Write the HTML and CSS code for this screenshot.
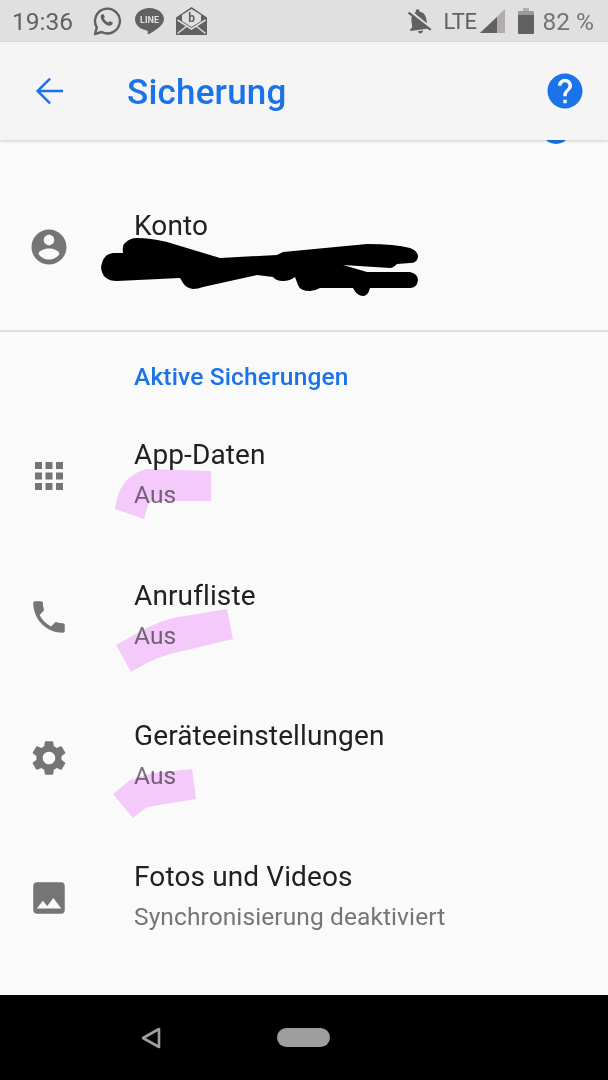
FILE: index.html
```html
<!DOCTYPE html>
<html lang="de">
<head>
    <meta charset="UTF-8">
    <meta name="viewport" content="width=device-width, initial-scale=1.0">
    <title>Sicherung</title>
    <link rel="stylesheet" href="styles.css">
</head>
<body>
<div class="phone">

    <div class="statusbar">
        <span class="time">19:36</span>
        <svg class="st-whatsapp" viewBox="0 0 28 30">
            <path d="M2 28l1.8-6.6A12.4 12.4 0 1 1 8.6 26z" fill="none" stroke="#616161" stroke-width="2.4" stroke-linejoin="round"/>
            <path d="M10.2 8c-.6 0-1.5.3-2 1.1-.8 1.100-.7 2.900.3 4.700 1.400 2.600 3.700 4.700 6.400 5.600 1.700.6 3.400.3 4.200-.8.500-.6.700-1.500.6-2.100l-3.100-1.500-1.300 1.500c-1.900-.7-3.600-2.300-4.500-4.200l1.100-1.300z" fill="#616161"/>
        </svg>
        <svg class="st-line" viewBox="0 0 29 27">
            <path d="M14.500 0C6.500 0 0 5 0 11.300c0 5.600 5 10.200 11.800 11.100.9.200 1.100.6 1 1.300l-.2 1.800c-.1.800.5 1 1.300.6 3.500-1.800 14.900-8 15.100-14.800C29 5 22.500 0 14.500 0z" fill="#616161"/>
            <text x="14.500" y="14.500" class="st-line-text" text-anchor="middle">LINE</text>
        </svg>
        <svg class="st-mail" viewBox="0 0 31 28">
            <path d="M15.500 0L31 10.500V28H0V10.500z" fill="#616161"/>
            <path d="M6 8l9.500-6 9.500 6v6l-9.500 6-9.500-6z" fill="#e0e0e0"/>
            <path d="M1.500 13l14 9 14-9M1.500 26.500l10-8M29.500 26.500l-10-8" fill="none" stroke="#e0e0e0" stroke-width="1.500"/>
            <text x="15.500" y="15" class="st-mail-text" text-anchor="middle">b</text>
        </svg>
        <span class="spacer"></span>
        <svg class="st-bell" viewBox="0 0 24 24"><path d="M20 18.690L7.840 6.140 5.270 3.490 4 4.760l2.800 2.800v.01c-.52.99-.8 2.160-.8 3.420v5l-2 2v1h13.730l2 2L21 19.720l-1-1.030zM12 22c1.110 0 2-.89 2-2h-4c0 1.110.89 2 2 2zm6-7.320V11c0-3.080-1.640-5.640-4.500-6.320V4c0-.83-.67-1.500-1.500-1.500s-1.500.67-1.500 1.500v.68c-.15.03-.29.08-.42.12-.1.03-.2.07-.3.11h-.01c-.2.08-.4.17-.59.27-.01 0-.01 0-.02.01L18 14.680z" fill="#616161"/></svg>
        <span class="lte">LTE</span>
        <svg class="st-signal" viewBox="0 0 25 24">
            <path d="M25 0v24H0z" fill="#b0acb0"/>
            <path d="M17 8v16H0z" fill="#616161"/>
        </svg>
        <svg class="st-battery" viewBox="0 0 16 26">
            <path d="M5 0h6v3H5z" fill="#b0acb0"/>
            <path d="M1 3h14a1 1 0 0 1 1 1v3H0V4a1 1 0 0 1 1-1z" fill="#9a989a"/>
            <path d="M0 7h16v18a1 1 0 0 1-1 1H1a1 1 0 0 1-1-1z" fill="#616161"/>
        </svg>
        <span class="percent">82 %</span>
    </div>

    <header class="appbar">
        <svg class="icon" viewBox="0 0 24 24"><path d="M20 11.300H7.200l5.900-5.900L12.100 4.400 4.500 12l7.600 7.600 1-1-5.900-5.900H20z" fill="#1a73e8"/></svg>
        <h1 class="appbar-title">Sicherung</h1>
        <svg class="icon" viewBox="0 0 24 24"><path d="M12 2C6.480 2 2 6.480 2 12s4.480 10 10 10 10-4.480 10-10S17.520 2 12 2zm1 17h-2v-2h2v2zm2.070-7.750l-.9.92C13.450 12.900 13 13.500 13 15h-2v-.5c0-1.100.45-2.100 1.170-2.830l1.240-1.260c.37-.36.59-.86.59-1.410 0-1.100-.9-2-2-2s-2 .9-2 2H8c0-2.210 1.790-4 4-4s4 1.790 4 4c0 .88-.36 1.680-.93 2.250z" fill="#1a73e8"/></svg>
    </header>

    <main class="content">
        <span class="scrolled-dot"></span>

        <section class="row row-account">
            <svg class="icon" viewBox="0 0 24 24"><path d="M12 2C6.480 2 2 6.480 2 12s4.480 10 10 10 10-4.480 10-10S17.520 2 12 2zm0 3c1.660 0 3 1.340 3 3s-1.340 3-3 3-3-1.340-3-3 1.340-3 3-3zm0 14.200c-2.500 0-4.710-1.280-6-3.220.03-1.990 4-3.080 6-3.080 1.990 0 5.970 1.090 6 3.080-1.290 1.940-3.500 3.220-6 3.220z" fill="#757575"/></svg>
            <div class="row-text">
                <div class="title">Konto</div>
                <div class="sub">&nbsp;</div>
            </div>
        </section>

        <h2 class="group-title">Aktive Sicherungen</h2>

        <section class="row">
            <svg class="icon" viewBox="0 0 24 24"><path d="M4 8h4V4H4v4zm6 12h4v-4h-4v4zm-6 0h4v-4H4v4zm0-6h4v-4H4v4zm6 0h4v-4h-4v4zm6-10v4h4V4h-4zm-6 4h4V4h-4v4zm6 6h4v-4h-4v4zm0 6h4v-4h-4v4z" fill="#757575"/></svg>
            <div class="row-text">
                <div class="title">App-Daten</div>
                <div class="sub">Aus</div>
            </div>
        </section>

        <section class="row">
            <svg class="icon" viewBox="0 0 24 24"><path d="M6.620 10.790c1.440 2.830 3.760 5.140 6.590 6.590l2.200-2.200c.27-.27.67-.36 1.020-.24 1.120.37 2.330.57 3.570.57.55 0 1 .45 1 1V20c0 .55-.45 1-1 1-9.390 0-17-7.610-17-17 0-.55.45-1 1-1h3.500c.55 0 1 .45 1 1 0 1.250.2 2.450.57 3.570.11.35.03.74-.25 1.020l-2.200 2.200z" fill="#757575"/></svg>
            <div class="row-text">
                <div class="title">Anrufliste</div>
                <div class="sub">Aus</div>
            </div>
        </section>

        <section class="row">
            <svg class="icon" viewBox="0 0 24 24"><path d="M19.140 12.940c.04-.3.06-.61.06-.94 0-.32-.02-.64-.07-.94l2.030-1.580c.18-.14.23-.41.12-.61l-1.920-3.320c-.12-.22-.37-.29-.59-.22l-2.390.96c-.5-.38-1.030-.7-1.620-.94l-.36-2.540c-.04-.24-.24-.41-.48-.41h-3.840c-.24 0-.43.17-.47.41l-.36 2.540c-.59.24-1.130.57-1.620.94l-2.390-.96c-.22-.08-.47 0-.59.22L2.740 8.870c-.12.21-.08.47.12.61l2.030 1.580c-.05.3-.09.63-.09.94s.02.64.07.94l-2.030 1.580c-.18.14-.23.41-.12.61l1.920 3.320c.12.22.37.29.59.22l2.390-.96c.5.38 1.030.7 1.620.94l.36 2.540c.05.24.24.41.48.41h3.840c.24 0 .44-.17.47-.41l.36-2.540c.59-.24 1.130-.56 1.620-.94l2.390.96c.22.08.47 0 .59-.22l1.920-3.320c.12-.22.07-.47-.12-.61l-2.010-1.580zM12 15.600c-1.980 0-3.600-1.620-3.600-3.600s1.620-3.600 3.600-3.600 3.600 1.620 3.600 3.600-1.620 3.600-3.600 3.600z" fill="#757575"/></svg>
            <div class="row-text">
                <div class="title">Geräteeinstellungen</div>
                <div class="sub">Aus</div>
            </div>
        </section>

        <section class="row">
            <svg class="icon" viewBox="0 0 24 24"><path d="M21 19V5c0-1.100-.9-2-2-2H5c-1.100 0-2 .9-2 2v14c0 1.100.9 2 2 2h14c1.100 0 2-.9 2-2zM8.500 13.500l2.500 3.010L14.500 12l4.500 6H5l3.500-4.500z" fill="#757575"/></svg>
            <div class="row-text">
                <div class="title">Fotos und Videos</div>
                <div class="sub">Synchronisierung deaktiviert</div>
            </div>
        </section>
    </main>

    <nav class="navbar">
        <svg class="nav-back" viewBox="0 0 20 22"><path d="M2 11L18 2v18z" fill="none" stroke="#9e9e9e" stroke-width="2.600" stroke-linejoin="round"/></svg>
        <span class="nav-home"></span>
    </nav>

    <!-- Kritzeleien vom Screenshot -->
    <svg class="scribbles" viewBox="0 0 608 1080">
        <path class="ink" d="M101 267Q103 254 113 253L123 253Q122 245 125 243Q130 238 137 238Q150 238 167 242L220 258L277 255L283 252L367 244Q395 244 410 248Q418 251 418 257Q417 263 410 263L397 264Q393 268 390 268L343 265L367 272L410 272Q418 274 418 280Q417 288 410 288L370 288Q368 296 363 296Q357 296 353 288L320 288Q315 291 310 291Q300 291 298 285L295 277Q290 281 283 281Q276 281 273 277L257 275L203 287Q198 289 193 289Q186 288 183 283L180 278L117 281Q102 281 101 267z"/>
        <path class="marker" d="M115 509Q117 497 120 490Q124 482 130 477Q138 471 147 469L211 471V501H157Q150 501 148 505L144 519z"/>
        <path class="marker" d="M116 645L143 630Q158 622 173 618L227 609L233 639L187 650Q165 654 147 663L131 672z"/>
        <path class="marker" d="M113 794L130 780Q140 776 153 773L192 769L196 799L147 807L133 818z"/>
    </svg>

</div>
</body>
</html>
```

FILE: styles.css
```css
html, body {
    margin: 0;
    padding: 0;
}

body {
    font-family: 'Roboto', 'Liberation Sans', sans-serif;
    background-color: #fafafa;
}

.phone {
    position: relative;
    width: 608px;
    height: 1080px;
    overflow: hidden;
    display: flex;
    flex-direction: column;
}

/* Statusleiste */
.statusbar {
    height: 42px;
    flex: none;
    background-color: #e0e0e0;
    color: #616161;
    display: flex;
    align-items: center;
    padding: 0 14px 0 12px;
    box-sizing: border-box;
}

.time {
    font-size: 24.5px;
    width: 81px;
}

.st-whatsapp {
    width: 28px;
    height: 30px;
    margin-right: 14px;
}

.st-line {
    width: 29px;
    height: 27px;
    margin-right: 12px;
}

.st-line-text {
    font-size: 9px;
    font-weight: 700;
    fill: #e0e0e0;
}

.st-mail {
    width: 31px;
    height: 28px;
}

.st-mail-text {
    font-size: 12px;
    font-weight: 700;
    fill: #616161;
}

.spacer {
    flex: 1;
}

.st-bell {
    width: 30px;
    height: 30px;
    margin-right: 9px;
    transform: rotate(-8deg);
}

.lte {
    font-size: 22px;
    width: 37px;
    letter-spacing: -0.5px;
}

.st-signal {
    width: 25px;
    height: 24px;
    margin-right: 13px;
}

.st-battery {
    width: 16px;
    height: 26px;
    margin-right: 8px;
}

.percent {
    font-size: 24.5px;
    color: #757575;
}

/* Kopfzeile */
.appbar {
    position: relative;
    z-index: 2;
    height: 98px;
    flex: none;
    background-color: #f5f5f5;
    box-shadow: 0 1px 3px rgba(0, 0, 0, 0.2);
    display: flex;
    align-items: center;
    padding: 0 22px 0 28px;
}

.appbar-title {
    flex: 1;
    margin: 2px 0 0 57px;
    font-size: 35px;
    font-weight: 500;
    letter-spacing: 0.2px;
    color: #1a73e8;
}

.icon {
    width: 42px;
    height: 42px;
    flex: none;
}

/* Liste */
.content {
    position: relative;
    flex: 1;
    background-color: #fafafa;
}

.scrolled-dot {
    position: absolute;
    top: -26px;
    left: 541px;
    width: 30px;
    height: 30px;
    border-radius: 50%;
    background-color: #1a73e8;
}

.row {
    height: 140.7px;
    display: flex;
    align-items: center;
    padding-left: 28px;
}

.row .icon {
    margin-right: 64px;
}

.row-text {
    margin-bottom: 3px;
}

.row-account {
    height: 192px;
    box-sizing: border-box;
    padding-top: 24px;
    border-bottom: 2px solid #e0e0e0;
}

.title {
    font-size: 28px;
    line-height: 40px;
    letter-spacing: 0.12px;
    color: #212121;
}

.sub {
    font-size: 24.5px;
    line-height: 40px;
    letter-spacing: 0.1px;
    color: #757575;
}

.group-title {
    margin: 0;
    height: 74px;
    box-sizing: border-box;
    padding: 27px 0 0 134px;
    font-size: 24.5px;
    line-height: 36px;
    font-weight: 500;
    letter-spacing: 0.15px;
    color: #1a73e8;
}

/* Navigationsleiste */
.navbar {
    height: 85px;
    flex: none;
    background-color: #000;
    position: relative;
    display: flex;
    align-items: center;
    justify-content: center;
}

.nav-back {
    position: absolute;
    left: 141px;
    top: 32px;
    width: 20px;
    height: 22px;
}

.nav-home {
    width: 53px;
    height: 19px;
    margin-right: 2px;
    border-radius: 10px;
    background-color: #9e9e9e;
}

/* Kritzeleien liegen ueber allem, multiply damit der Text durchscheint */
.scribbles {
    position: absolute;
    left: 0;
    top: 0;
    width: 608px;
    height: 1080px;
    z-index: 3;
    pointer-events: none;
    mix-blend-mode: multiply;
}

.ink {
    fill: #000;
}

.marker {
    fill: #f8ceff;
}
```
